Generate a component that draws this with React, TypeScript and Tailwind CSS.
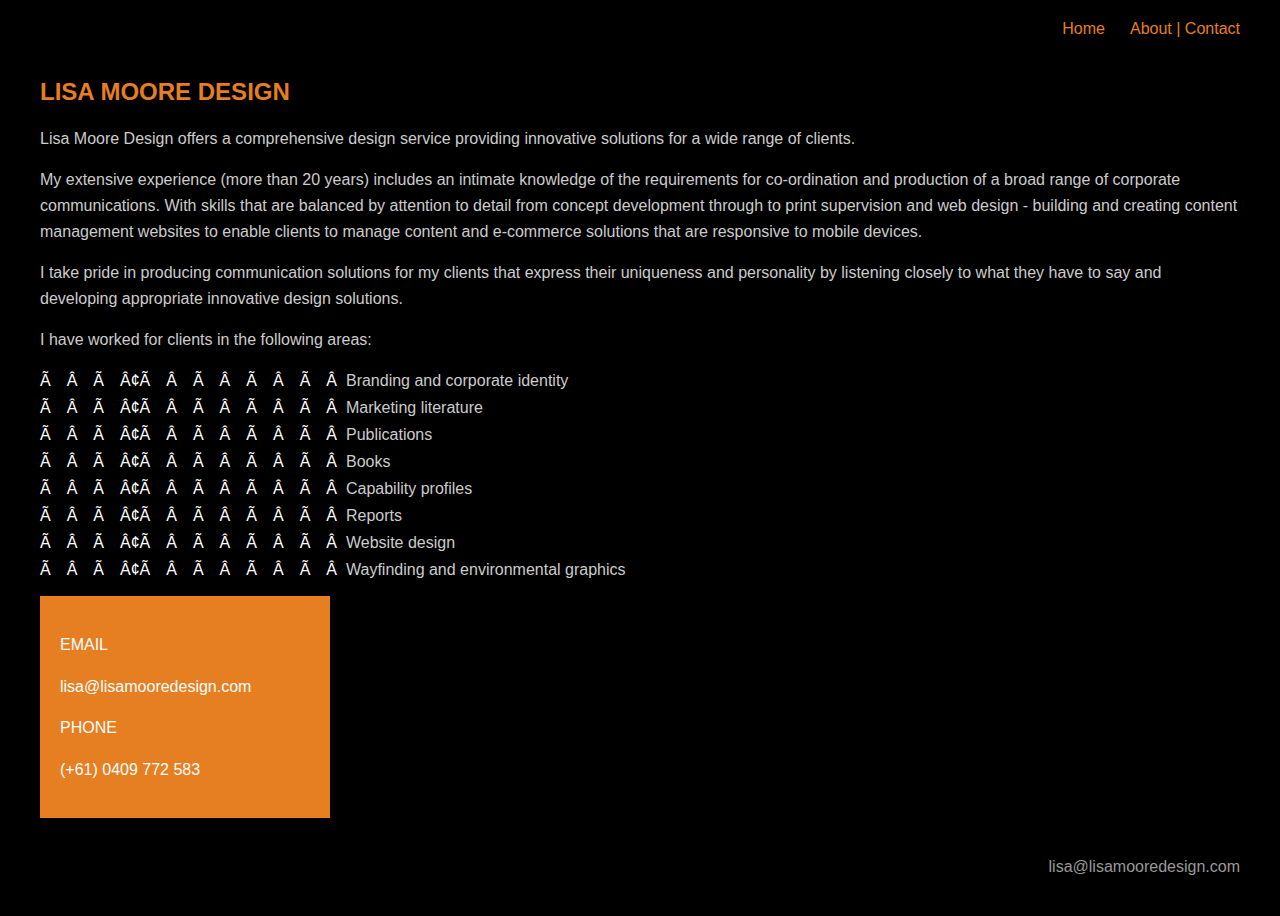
import React from "react";

const areas = [
  "Branding and corporate identity",
  "Marketing literature",
  "Publications",
  "Books",
  "Capability profiles",
  "Reports",
  "Website design",
  "Wayfinding and environmental graphics",
];

// garbled bullet characters, as they show on the original page
const junk = ["Ã", "Â", "Ã", "Â¢Ã", "Â", "Ã", "Â", "Ã", "Â", "Ã", "Â"];

export default function App() {
  return (
    <div className="min-h-[916px] bg-black px-10 pb-10 font-['Liberation_Sans',Arial,sans-serif] text-[16px] text-[#cccccc]">
      {/* Nav */}
      <nav className="flex justify-end gap-[25px] pt-[19px] leading-5 text-[#e67e22]">
        <a href="#">Home</a>
        <span>
          <a href="#">About</a> | <a href="#">Contact</a>
        </span>
      </nav>

      <h1 className="mt-[37px] text-[24px] font-bold leading-8 text-[#e67e22]">
        LISA MOORE DESIGN
      </h1>

      <div className="mt-[18px] leading-[26px]">
        <p className="mb-[15px]">
          Lisa Moore Design offers a comprehensive design service providing innovative solutions for a wide range of clients.
        </p>
        <p className="mb-[15px]">
          My extensive experience (more than 20 years) includes an intimate knowledge of the requirements for co-ordination and production of a broad range of corporate communications. With skills that are balanced by attention to detail from concept development through to print supervision and web design - building and creating content management websites to enable clients to manage content and e-commerce solutions that are responsive to mobile devices.
        </p>
        <p className="mb-[15px]">
          I take pride in producing communication solutions for my clients that express their uniqueness and personality by listening closely to what they have to say and developing appropriate innovative design solutions.
        </p>
        <p className="mb-[14px]">I have worked for clients in the following areas:</p>
      </div>

      <ul className="leading-[27px]">
        {areas.map((a) => (
          <li key={a} className="flex whitespace-nowrap">
            {junk.map((j, i) => (
              <span
                key={i}
                className={
                  i === junk.length - 1 ? "mr-[9px] text-white" : "mr-[16px] text-white"
                }
              >
                {j}
              </span>
            ))}
            <span>{a}</span>
          </li>
        ))}
      </ul>

      {/* Contact box */}
      <div className="mt-[13px] w-[290px] bg-[#e67e22] px-5 py-5 leading-[26px] text-white">
        <p className="mt-[16px]">EMAIL</p>
        <p className="mt-[16px]">lisa@lisamooredesign.com</p>
        <p className="mt-[15px]">PHONE</p>
        <p className="mt-[16px] mb-[15px]">(+61) 0409 772 583</p>
      </div>

      <footer className="mt-[39px] text-right leading-5 text-[#999999]">
        lisa@lisamooredesign.com
      </footer>
    </div>
  );
}
